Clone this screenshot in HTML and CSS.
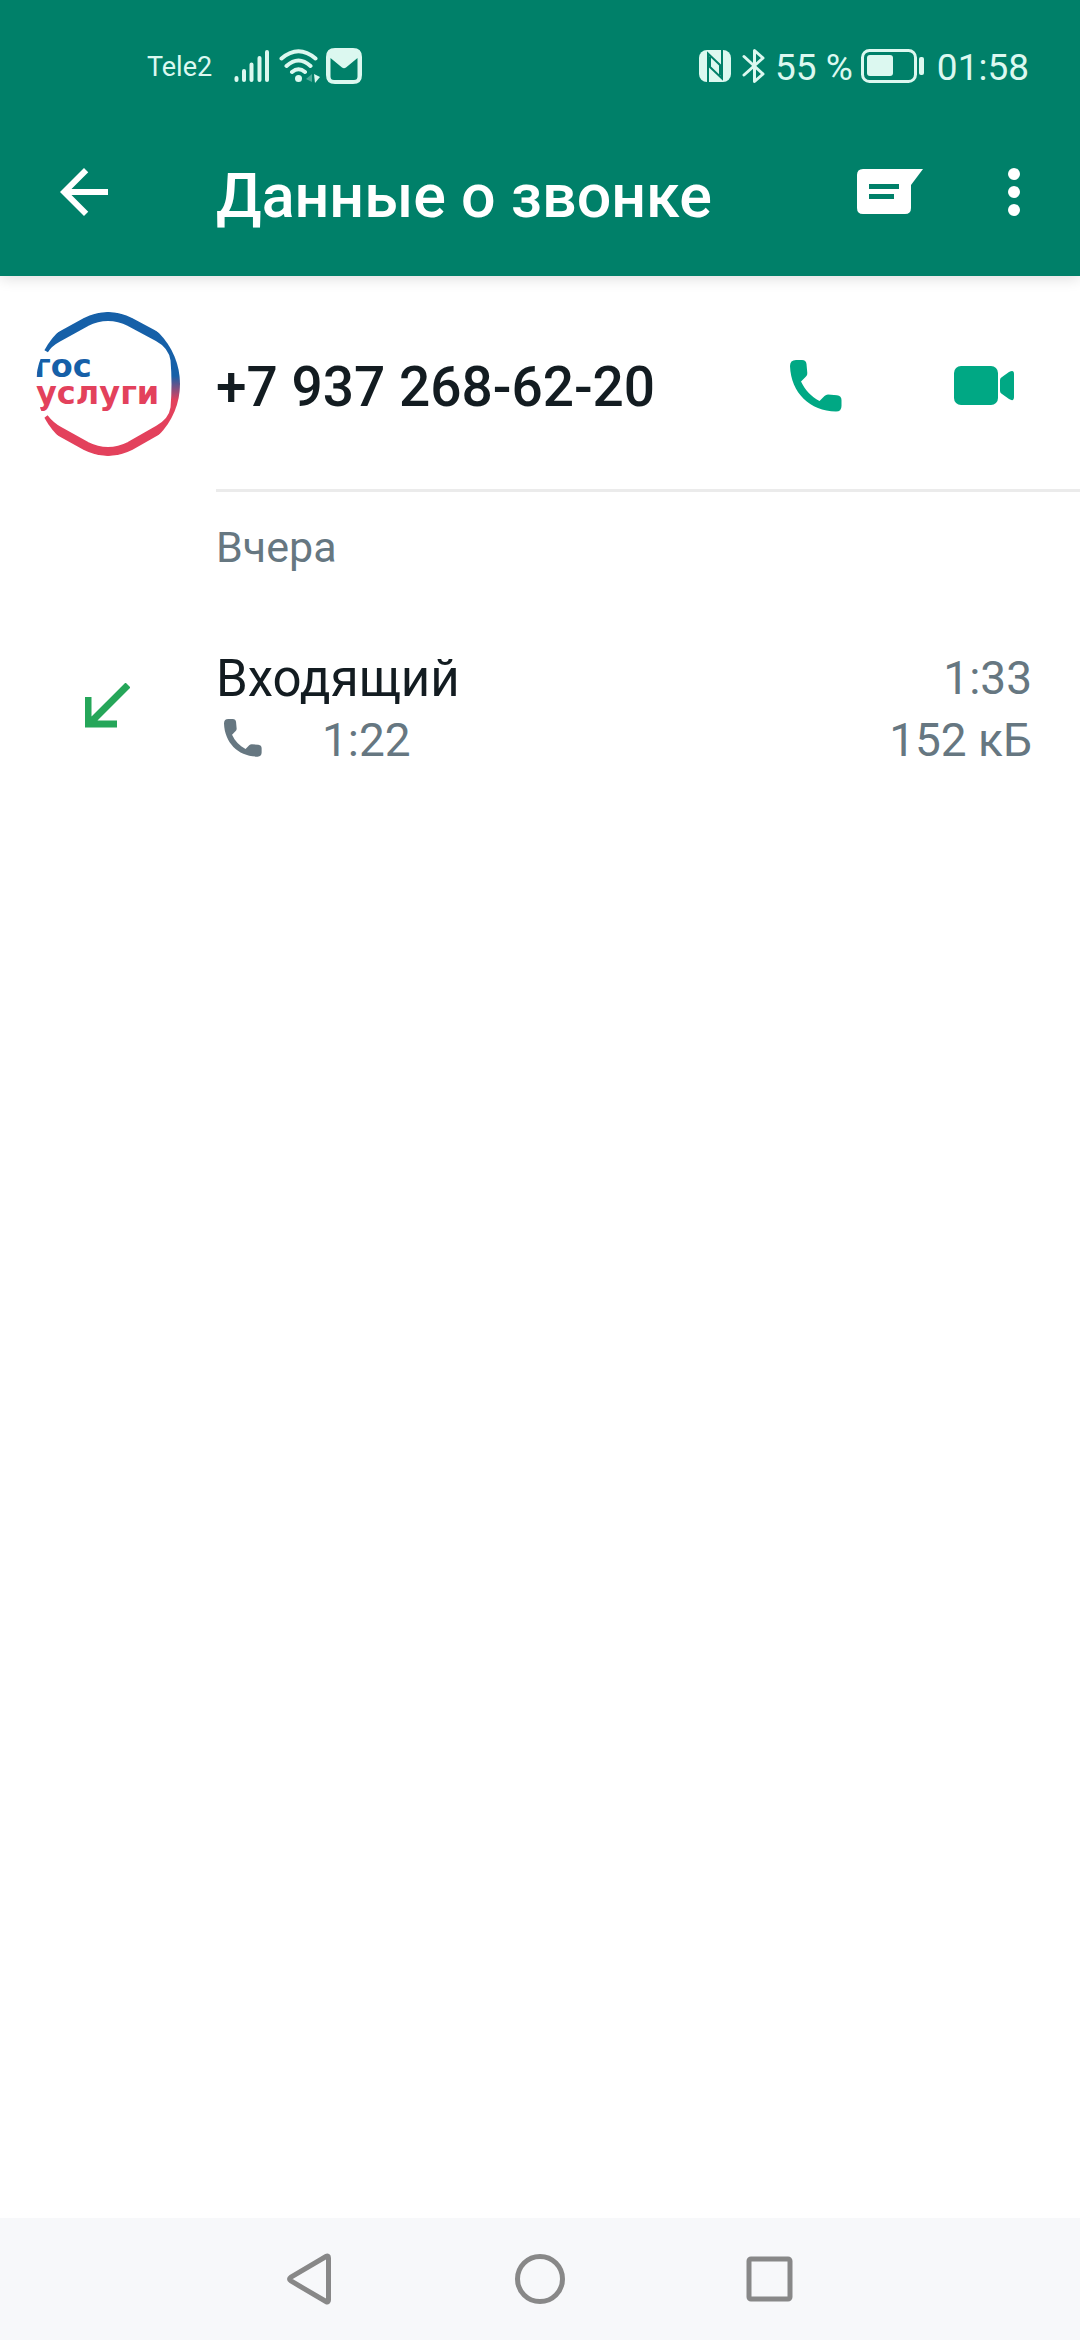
FILE: index.html
```html
<!DOCTYPE html>
<html lang="ru">
<head>
<meta charset="utf-8">
<meta name="viewport" content="width=device-width, initial-scale=1">
<title>Данные о звонке</title>
<link rel="stylesheet" href="styles.css">
</head>
<body>
<svg class="defs" aria-hidden="true">
  <symbol id="phone" viewBox="0 0 52 52">
    <path d="M6 0H12Q16 0 16.500 4L17.300 13Q17.500 15 16 16.500L11 21.500C15 30 21 36.500 29.500 41L34.500 36Q36 34.500 38 34.500L47 35.300Q51.500 36 51.500 40V46Q51.500 51.500 46 51.500C20 51 1 33 0 6Q0 0 6 0Z" fill="currentColor"/>
  </symbol>
</svg>
<header class="top">
  <div class="status">
    <div class="status-left">
      <span class="carrier">Tele2</span>
      <svg class="signal" viewBox="0 0 36 34" stroke="currentColor" stroke-width="4" stroke-linecap="round"><path d="M2.500 29V31M10 22V31M17.500 15.500V31M25.500 9V31M33 3V31"/></svg>
      <svg class="wifi" viewBox="0 0 42 34" fill="none" stroke="currentColor" stroke-width="4" stroke-linecap="round"><path d="M2.500 9.500Q19.500-5 36.500 9.500M7.500 17Q19.500 6 31.500 17M13 23Q19.500 17.500 26 23"/><circle cx="19.500" cy="29.500" r="3.500" fill="currentColor" stroke="none"/><path d="M27 30L33 25V33Z" fill="currentColor" stroke="none" opacity=".35"/><path d="M35 25L41 28L36 34Z" fill="currentColor" stroke="none"/></svg>
      <svg class="mail" viewBox="0 0 36 36"><path fill="currentColor" fill-rule="evenodd" d="M9 0H27Q36 0 36 9V27Q36 36 27 36H9Q0 36 0 27V9Q0 0 9 0ZM4.500 10V28.500Q4.500 32 8 32H28Q31.500 32 31.500 28.500V10L20 19.500Q18 21 16 19.500Z"/></svg>
    </div>
    <div class="status-right">
      <svg class="nfc" viewBox="0 0 32 32"><rect width="32" height="32" rx="8" fill="currentColor"/><path d="M9 32V3.500L21 15V25.500M23 0V28.500L11 17V6.500" class="nfc-cut"/></svg>
      <svg class="bt" viewBox="0 0 24 36" fill="none" stroke="currentColor" stroke-width="3" stroke-linejoin="round" stroke-linecap="round"><path d="M2 8.500L21 26L12.500 33.500V2.500L21 10L2 27"/></svg>
      <span>55 %</span>
      <svg class="battery" viewBox="0 0 64 34"><rect x="1.500" y="1.500" width="53" height="31" rx="7" fill="none" stroke="currentColor" stroke-width="3"/><rect x="6" y="6" width="26" height="21" rx="3" fill="currentColor"/><rect x="58" y="8" width="5" height="18" rx="2" fill="currentColor"/></svg>
      <span class="clock">01:58</span>
    </div>
  </div>
  <div class="toolbar">
    <button class="icon-btn" aria-label="Назад"><svg viewBox="0 0 24 24"><path fill="currentColor" d="M20 11H7.830l5.590-5.590L12 4l-8 8 8 8 1.410-1.410L7.830 13H20v-2z"/></svg></button>
    <h1>Данные о звонке</h1>
    <button class="icon-btn chat-btn" aria-label="Написать сообщение"><svg viewBox="0 0 72 72"><path fill="currentColor" fill-rule="evenodd" d="M8 13H69L57 29V52Q57 58 51 58H9Q3 58 3 52V19Q3 13 9 13ZM15 28V33H45V28ZM15 38V43H40V38Z"/></svg></button>
    <button class="icon-btn" aria-label="Ещё"><svg viewBox="0 0 24 24" fill="currentColor"><circle cx="12" cy="6" r="2"/><circle cx="12" cy="12" r="2"/><circle cx="12" cy="18" r="2"/></svg></button>
  </div>
</header>
<main>
  <section class="contact">
    <svg class="avatar" viewBox="0 0 144 144" role="img" aria-label="Госуслуги">
      <defs>
        <linearGradient id="ring" x1="0" y1="0" x2="0" y2="1"><stop offset=".44" stop-color="#1660a8"/><stop offset=".62" stop-color="#e3415c"/></linearGradient>
        <clipPath id="round"><circle cx="72" cy="72" r="72"/></clipPath>
      </defs>
      <g clip-path="url(#round)">
        <path d="M8 38Q12 31 21 26L50 10Q72-1 94 10L122 25Q137 33 139 48Q141 72 139 96Q137 110 122 118L94 134Q72 145 50 134L23 119Q14 114 8 106" fill="none" stroke="url(#ring)" stroke-width="9"/>
        <text class="logo logo-blue" x="-2" y="65">гос</text>
        <text class="logo logo-red" x="0" y="92">услуг<tspan lang="sr">и</tspan></text>
      </g>
    </svg>
    <div class="contact-body">
      <h2>+7 937 268-62-20</h2>
      <button class="icon-btn call-btn" aria-label="Позвонить"><svg class="call"><use href="#phone"/></svg></button>
      <button class="icon-btn" aria-label="Видеозвонок"><svg class="video" viewBox="0 0 60 39" fill="currentColor"><rect width="44" height="39" rx="7"/><path d="M46 14Q46 12 48 11L55 6Q60 3 60 8V31Q60 36 55 33L48 28Q46 27 46 25Z"/></svg></button>
    </div>
  </section>
  <h3>Вчера</h3>
  <section class="entry">
    <svg class="incoming" viewBox="0 0 45 45" fill="none" stroke="#25a659" stroke-width="7"><path d="M43 2L4 41M3 14V41H32"/></svg>
    <div class="entry-body">
      <div class="line"><span class="kind">Входящий</span><span>1:33</span></div>
      <div class="line"><svg class="call-small"><use href="#phone"/></svg><span class="grow">1:22</span><span>152 кБ</span></div>
    </div>
  </section>
</main>
<nav class="nav">
  <button class="nav-btn" aria-label="Назад"><svg viewBox="0 0 52 52"><path d="M42 3.500Q44.500 2 44.500 5V47Q44.500 50 42 48.500L7 28Q4 26 7 24Z"/></svg></button>
  <button class="nav-btn" aria-label="Домой"><svg viewBox="0 0 52 52"><circle cx="26" cy="26" r="22.500"/></svg></button>
  <button class="nav-btn" aria-label="Недавние"><svg viewBox="0 0 52 52"><rect x="5" y="6" width="41" height="40" rx="2"/></svg></button>
</nav>
</body>
</html>
```

FILE: styles.css
```css
* { box-sizing: border-box; }
body {
  margin: 0;
  min-height: 100vh;
  display: flex;
  flex-direction: column;
  background: #fff;
  color: #131c21;
  font-family: Roboto, "Noto Sans", sans-serif;
}
svg { display: block; flex: none; }
.defs { width: 0; height: 0; position: absolute; }
h1, h2, h3 { margin: 0; font-weight: 500; }
button { padding: 0; border: 0; background: none; color: inherit; }

.top {
  background: #008069;
  color: #fff;
  box-shadow: 0 2px 14px rgba(0, 0, 0, .14);
}
.status {
  height: 108px;
  padding: 24px 51px 0 147px;
  display: flex;
  align-items: center;
  justify-content: space-between;
  color: #dcf8f0;
  font-size: 37px;
}
.status-left, .status-right { display: flex; align-items: center; }
.status span { padding-top: 2px; }
.carrier { font-size: 27px; margin-right: 22px; }
.signal { width: 36px; height: 34px; margin-right: 9px; }
.wifi { width: 42px; height: 34px; margin-right: 5px; }
.mail { width: 36px; height: 36px; }
.nfc { width: 32px; height: 32px; margin-right: 11px; }
.nfc-cut { fill: none; stroke: #008069; stroke-width: 2; }
.bt { width: 24px; height: 36px; margin-right: 9px; }
.battery { width: 64px; height: 34px; margin: 0 12px 0 8px; }

.toolbar {
  height: 168px;
  padding: 0 30px 0 48px;
  display: flex;
  align-items: center;
}
.icon-btn { width: 72px; height: 72px; flex: none; display: grid; place-items: center; }
.toolbar svg { width: 72px; height: 72px; }
h1 { flex: 1; margin-left: 96px; padding-top: 8px; font-size: 61px; line-height: 84px; }
.chat-btn { margin-right: 52px; }

main { flex: 1; }
.contact {
  display: flex;
  align-items: center;
  padding-left: 36px;
}
.avatar { width: 144px; height: 144px; margin-right: 36px; }
.logo { font-family: "DejaVu Sans", sans-serif; font-weight: 700; font-size: 32px; }
.logo-blue { fill: #1660a8; }
.logo-red { fill: #e3415c; }
.contact-body {
  flex: 1;
  height: 216px;
  padding: 6px 60px 0 0;
  display: flex;
  align-items: center;
  border-bottom: 3px solid #ebebeb;
}
h2 { flex: 1; padding-top: 3px; font-size: 55px; line-height: 72px; }
.contact .icon-btn { color: #00a884; }
.call-btn { margin-right: 96px; }
.call { width: 52px; height: 52px; }
.video { width: 60px; height: 39px; }
h3 {
  padding: 27px 48px 0 216px;
  font-size: 43px;
  line-height: 57px;
  font-weight: 400;
  color: #667781;
}
.entry {
  display: flex;
  align-items: center;
  padding: 67px 48px 0 85px;
}
.incoming { width: 45px; height: 45px; margin-right: 86px; }
.entry-body { flex: 1; }
.line {
  display: flex;
  align-items: center;
  justify-content: space-between;
  height: 62px;
  font-size: 46px;
  color: #667781;
}
.line span { padding-top: 8px; }
.kind { font-size: 51px; color: #131c21; }
.call-small { width: 38px; height: 38px; margin: 4px 60px 0 8px; }
.grow { flex: 1; }

.nav {
  height: 122px;
  background: #f7f8fa;
  display: flex;
  align-items: center;
  justify-content: center;
  gap: 178px;
}
.nav-btn { width: 52px; height: 52px; }
.nav svg { fill: none; stroke: #888; stroke-width: 5; }
```
